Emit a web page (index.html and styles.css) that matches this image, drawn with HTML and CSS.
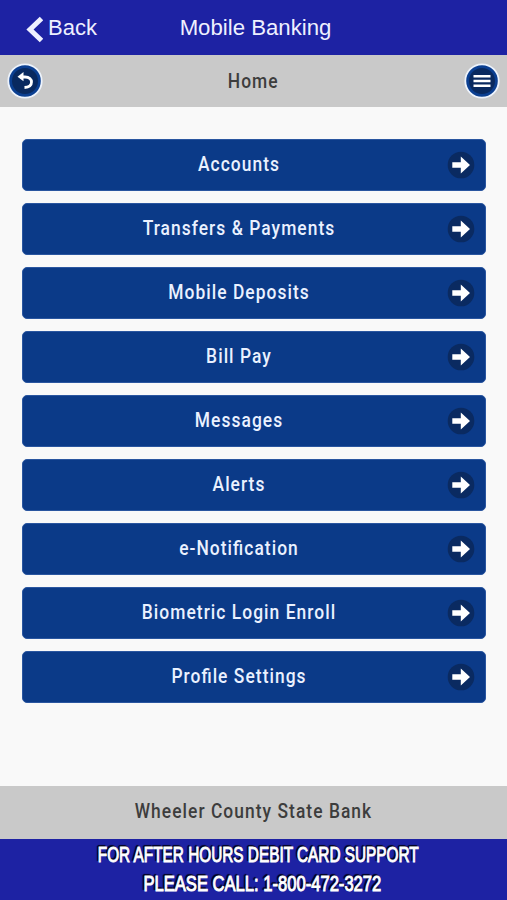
FILE: index.html
```html
<!DOCTYPE html>
<html lang="en">
<head>
    <meta charset="utf-8">
    <meta name="viewport" content="width=device-width, initial-scale=1">
    <title>Mobile Banking</title>
    <link rel="stylesheet" href="styles.css">
</head>
<body>
    <svg class="sprite" width="0" height="0">
        <symbol id="arrow" viewBox="0 0 28 28">
            <circle cx="14" cy="14" r="13.3" fill="#0a2a61"/>
            <path d="M5.3 11.2h8.5V5.5L23 14l-9.2 8.5v-5.7H5.3z" fill="#fff"/>
        </symbol>
    </svg>

    <header class="app-bar">
        <a class="back" href="#">
            <svg width="17" height="27" viewBox="0 0 17 27"><path d="M15.5 2.5L4 13.5l11.5 11" fill="none" stroke="#eef0ff" stroke-width="5"/></svg>
            <span>Back</span>
        </a>
        <h1>Mobile Banking</h1>
    </header>

    <nav class="sub-bar">
        <a class="round" href="#">
            <svg width="36" height="36" viewBox="0 0 36 36">
                <circle cx="18" cy="18" r="16.7" fill="#0b3f91" stroke="#edf3fc" stroke-width="1.8"/>
                <circle cx="18" cy="18" r="13" fill="#09295f"/>
                <path d="M13 14h5c4.5 0 6.500 2.500 6.500 5 0 3.200-2.500 5.200-7 5.500" fill="none" stroke="#fff" stroke-width="2.8"/>
                <path d="M10.5 13.7l6-4.700v9.200z" fill="#fff"/>
            </svg>
        </a>
        <h2><span class="narrow">Home</span></h2>
        <a class="round" href="#">
            <svg width="36" height="36" viewBox="0 0 36 36">
                <circle cx="18" cy="18" r="16.7" fill="#0b3f91" stroke="#edf3fc" stroke-width="1.8"/>
                <circle cx="18" cy="18" r="13" fill="#09295f"/>
                <path d="M9.5 13.2h17M9.5 18h17M9.5 22.8h17" stroke="#fff" stroke-width="2.6"/>
            </svg>
        </a>
    </nav>

    <main class="menu">
        <a class="item" href="#"><span class="narrow">Accounts</span><svg class="arrow"><use href="#arrow"/></svg></a>
        <a class="item" href="#"><span class="narrow">Transfers &amp; Payments</span><svg class="arrow"><use href="#arrow"/></svg></a>
        <a class="item" href="#"><span class="narrow">Mobile Deposits</span><svg class="arrow"><use href="#arrow"/></svg></a>
        <a class="item" href="#"><span class="narrow">Bill Pay</span><svg class="arrow"><use href="#arrow"/></svg></a>
        <a class="item" href="#"><span class="narrow">Messages</span><svg class="arrow"><use href="#arrow"/></svg></a>
        <a class="item" href="#"><span class="narrow">Alerts</span><svg class="arrow"><use href="#arrow"/></svg></a>
        <a class="item" href="#"><span class="narrow">e-Noti<span class="liga">fi</span>cation</span><svg class="arrow"><use href="#arrow"/></svg></a>
        <a class="item" href="#"><span class="narrow">Biometric Login Enroll</span><svg class="arrow"><use href="#arrow"/></svg></a>
        <a class="item" href="#"><span class="narrow">Pro<span class="liga">fi</span>le Settings</span><svg class="arrow"><use href="#arrow"/></svg></a>
    </main>

    <div class="bank-name"><span class="narrow">Wheeler County State Bank</span></div>

    <footer class="support">
        <p>FOR AFTER HOURS DEBIT CARD SUPPORT</p>
        <p class="phone">PLEASE CALL: 1-800-472-3272</p>
    </footer>
</body>
</html>
```

FILE: styles.css
```css
* {
    box-sizing: border-box;
}
body {
    margin: 0;
    height: 900px;
    overflow: hidden;
    display: flex;
    flex-direction: column;
    background: #f9f9f9;
    font-family: Roboto, "Liberation Sans", sans-serif;
}
a {
    color: inherit;
    text-decoration: none;
}
h1, h2, p {
    margin: 0;
    font-weight: normal;
}
.sprite {
    display: none;
}
.app-bar {
    height: 55px;
    display: grid;
    grid-template-columns: 1fr auto 1fr;
    align-items: center;
    padding: 3px 0 0 26px;
    background: #1d22a3;
    color: #eef0ff;
    font-family: "Liberation Sans", Arial, sans-serif;
}
.back {
    display: flex;
    align-items: center;
    gap: 5px;
    font-size: 22px;
}
.back span {
    margin-top: -3px;
}
.app-bar h1 {
    margin: -3px 22px 0 0;
    font-size: 22.2px;
}
.sub-bar {
    height: 52px;
    display: flex;
    align-items: center;
    justify-content: space-between;
    padding: 0 7px;
    background: #c9c9c9;
    color: #3d3d3d;
}
.round svg {
    display: block;
    margin-bottom: 1px;
}
.sub-bar h2 {
    font-size: 20px;
    font-weight: 500;
}
/* condensed look for the labels */
.narrow {
    display: inline-block;
    letter-spacing: 1.2px;
    white-space: nowrap;
    transform: scaleX(0.87);
}
.liga {
    letter-spacing: 0;
    margin-right: 1.2px;
}
.menu {
    flex: 1;
    display: flex;
    flex-direction: column;
    gap: 12px;
    padding: 32px 21px 0 22px;
}
.item {
    height: 52px;
    display: grid;
    grid-template-columns: 28px 1fr 28px;
    align-items: center;
    padding: 0 10px 0 0;
    border: 1px solid #2a56a0;
    border-radius: 5px;
    background: #0b3a88;
    color: #eaf1ff;
    font-size: 20px;
    font-weight: 500;
}
.item .narrow {
    grid-column: 2;
    margin: 0 20px 2px 0;
    text-align: center;
}
.arrow {
    width: 28px;
    height: 28px;
}
.bank-name {
    height: 53px;
    padding-bottom: 3px;
    display: flex;
    align-items: center;
    justify-content: center;
    background: #c9c9c9;
    color: #3d3d3d;
    font-size: 20px;
    font-weight: 500;
}
.support {
    height: 61px;
    padding: 2px 0 0 10px;
    display: flex;
    flex-direction: column;
    align-items: center;
    background: #1d22a3;
    color: #fff;
    font: bold 22.5px/28.5px "Liberation Sans", Arial, sans-serif;
    -webkit-text-stroke: 1px #fff;
    text-shadow: -3px -1px 1px #050520, -2px -2px 1px #050520;
    white-space: nowrap;
}
.support p {
    transform: scaleX(0.682);
}
.support .phone {
    margin-left: 7px;
    transform: scaleX(0.737);
}
```
